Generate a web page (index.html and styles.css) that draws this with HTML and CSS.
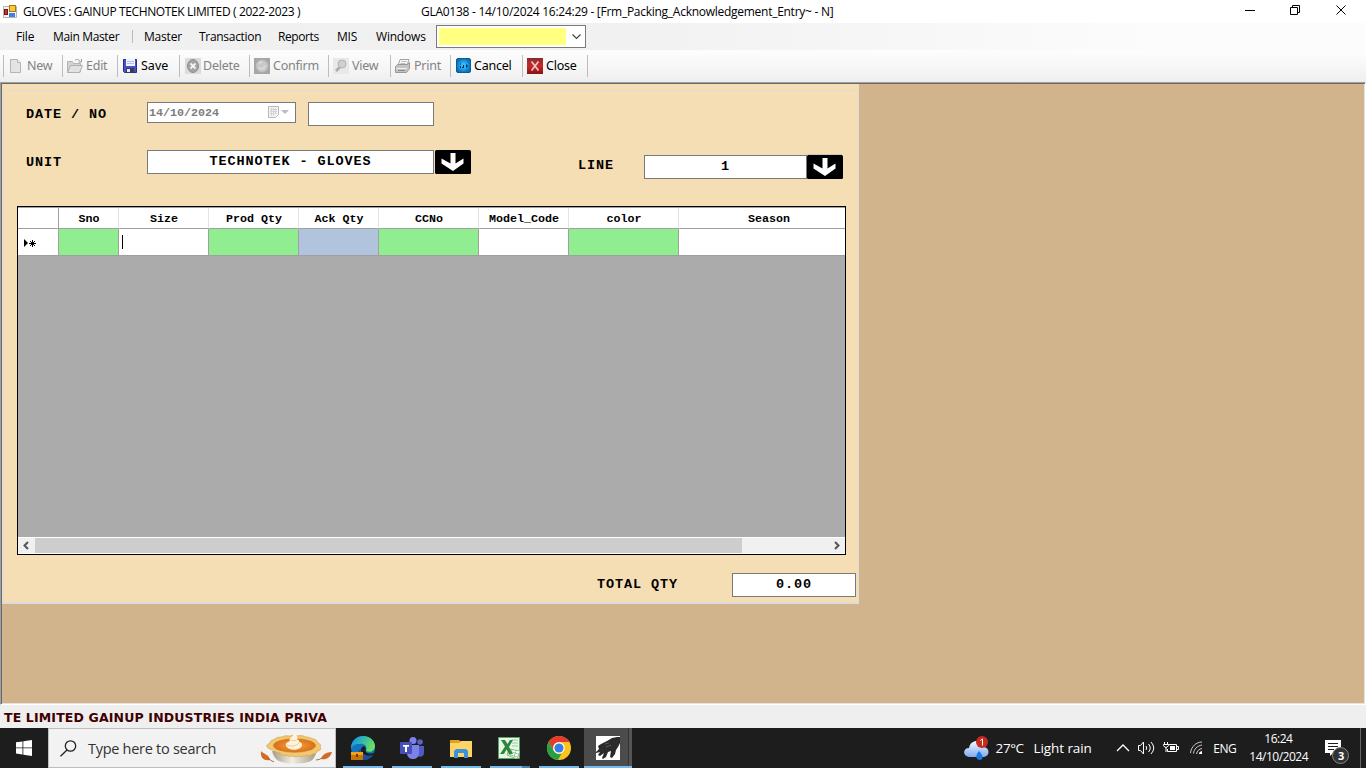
FILE: index.html
```
<!DOCTYPE HTML>
<html lang="en">
<head>
    <meta charset="UTF-8">
    <title>GLOVES : GAINUP TECHNOTEK LIMITED</title>
    <link rel="stylesheet" href="styles.css">
</head>
<body>
<div class="titlebar">
    <svg class="appicon" width="14" height="14" viewBox="0 0 14 14">
        <path d="M.5 1.500h13v11H.5z" fill="#f4f4f4" stroke="#b4b4b4"/>
        <rect x="6.500" y=".5" width="6" height="6" fill="#f8c838" stroke="#a87810"/>
        <rect x="1.500" y="4.500" width="3" height="5" fill="#d03020" stroke="#801010"/>
        <rect x="6" y="8" width="6" height="4" fill="#3d80e8"/>
    </svg>
    <span class="apptitle">GLOVES : GAINUP TECHNOTEK LIMITED ( 2022-2023 )</span>
    <span class="formtitle">GLA0138 - 14/10/2024 16:24:29 - [Frm_Packing_Acknowledgement_Entry~ - N]</span>
    <svg class="winbuttons" width="106" height="14" viewBox="0 0 106 14" fill="none" stroke="#000">
        <path d="M0 7.500h10"/>
        <path d="M45.500 4.500h7v7h-7zM47.500 4V2.500h7v7H53"/>
        <path d="M91.500 2.500l9 9M100.500 2.500l-9 9"/>
    </svg>
</div>

<div class="menubar">
    <span class="m-file">File</span>
    <span class="m-main">Main Master</span>
    <span class="m-master">Master</span>
    <span class="m-trans">Transaction</span>
    <span class="m-reports">Reports</span>
    <span class="m-mis">MIS</span>
    <span class="m-windows">Windows</span>
    <div class="combo">
        <div class="combovalue"></div>
        <svg width="9" height="6" viewBox="0 0 9 6" fill="none" stroke="#444" stroke-width="1.200"><path d="M.5 .5l4 4 4-4"/></svg>
    </div>
</div>

<div class="toolbar">
    <div class="tool t-new off">
        <svg width="16" height="16" viewBox="0 0 16 16"><path d="M1.500 1.500h7l3 3v10h-10z" fill="#e4e4e4" stroke="#b4b4b4"/><path d="M8.500 1.500v3h3" fill="#fff" stroke="#b4b4b4"/></svg>
        <span>New</span>
    </div>
    <div class="tool t-edit off">
        <svg width="16" height="16" viewBox="0 0 16 16"><path d="M.5 14V3.500h5l1 2h7V14z" fill="#d4d4d4" stroke="#b4b4b4"/><path d="M.5 14.500l3-7h12l-3 7z" fill="#e2e2e2" stroke="#b0b0b0"/><path d="M8 2.500c2-2 4-1 5 1M14.500 1v3h-3" fill="none" stroke="#999"/></svg>
        <span>Edit</span>
    </div>
    <div class="tool t-save">
        <svg width="15" height="16" viewBox="0 0 15 16"><path d="M.5 1.500h13v13h-12l-1-1z" fill="#4a50c4" stroke="#2a2c88"/><path d="M3 1h9v7H3z" fill="#eef2fc"/><path d="M4 3.500h7M4 5.500h7" stroke="#b4bce0"/><path d="M3 10h8v5H3z" fill="#333c66"/><path d="M4 11h3v3H4z" fill="#e8e8f4"/></svg>
        <span>Save</span>
    </div>
    <div class="tool t-delete off">
        <svg width="16" height="16" viewBox="0 0 16 16"><path fill="#dcdcdc" d="M0 0h16v16H0z"/><ellipse cx="8" cy="8" rx="5.500" ry="6.500" fill="#a4a4a4" stroke="#8e8e8e"/><path d="M5.500 5.500l5 5M10.500 5.500l-5 5" stroke="#f4f4f4" stroke-width="1.800"/></svg>
        <span>Delete</span>
    </div>
    <div class="tool t-confirm off">
        <svg width="16" height="16" viewBox="0 0 16 16"><path fill="#a6a6a6" d="M0 0h16v16H0z"/><circle cx="8" cy="8" r="6" fill="#c9c9c9" stroke="#bababa"/><path d="M5 10q4 2 6-2M5 5l3-1" fill="none" stroke="#dedede" stroke-width="1.500"/></svg>
        <span>Confirm</span>
    </div>
    <div class="tool t-view off">
        <svg width="16" height="16" viewBox="0 0 16 16"><path fill="#e8e8e8" d="M0 0h16v16H0z"/><path d="M3 13l5-5" stroke="#aaa" stroke-width="2.500"/><circle cx="9" cy="6" r="4" fill="#cfcfcf" stroke="#b4b4b4"/></svg>
        <span>View</span>
    </div>
    <div class="tool t-print off">
        <svg width="16" height="16" viewBox="0 0 16 16"><path d="M5 1.500h9l-2 6H3z" fill="#f6f6f6" stroke="#a4a4a4"/><path d="M6.500 3.500h5M5.500 5.500h5" stroke="#bbb"/><path d="M.5 8.500l2-2h10l2-2v6l-3 4H.5z" fill="#c4c4c4" stroke="#999"/><path d="M1 10.500h11" stroke="#eee"/><path d="M3 12.500h7" stroke="#888"/></svg>
        <span>Print</span>
    </div>
    <div class="tool t-cancel">
        <svg width="16" height="16" viewBox="0 0 16 16"><defs><radialGradient id="blue"><stop offset=".3" stop-color="#35b8f8"/><stop offset="1" stop-color="#0871b8"/></radialGradient></defs><rect x=".5" y=".5" width="14" height="14" rx="1.500" fill="url(#blue)" stroke="#085a98"/><path d="M4 6h1M4.500 8v2M6 9.500h2M7.500 7v2M10.500 6.500v3M11 8h1" stroke="#043050"/></svg>
        <span>Cancel</span>
    </div>
    <div class="tool t-close">
        <svg width="16" height="16" viewBox="0 0 16 16"><defs><linearGradient id="red" x2="0" y2="1"><stop stop-color="#8c2a2e"/><stop offset=".5" stop-color="#c82828"/><stop offset="1" stop-color="#851414"/></linearGradient></defs><path fill="url(#red)" d="M0 0h16v16H0z"/><path d="M4.500 3.500l7 9M11.500 3.500l-7 9" stroke="#f4c4c4" stroke-width="1.700"/></svg>
        <span>Close</span>
    </div>
</div>

<div class="mdi">
    <div class="form">
        <div class="groupbox">
            <div class="row row-date">
                <label>DATE / NO</label>
                <div class="field datepick">
                    <span>14/10/2024</span>
                    <svg width="22" height="13" viewBox="0 0 22 13"><path d="M.5 .5h10v8l-3 3h-7z" fill="#f4f4f4" stroke="#b8b8b8"/><path d="M2 3.500h7M2 5.500h7M2 7.500h7M3.500 2v8M5.500 2v8M7.500 2v6" stroke="#d4d4dc"/><path d="M13 4h8l-4 4z" fill="#bcbcbc"/></svg>
                </div>
                <div class="field entryno"></div>
            </div>
            <div class="row row-unit">
                <label>UNIT</label>
                <div class="field unit">TECHNOTEK - GLOVES</div>
                <svg class="drop" width="36" height="25" viewBox="0 0 36 25"><rect width="36" height="24" rx="1.500"/><path d="M15.500 3h5v10.500l8-5v5L18 21 6.500 13.500v-5l9 5z" fill="#fff"/></svg>
                <label class="linelabel">LINE</label>
                <div class="field line">1</div>
                <svg class="drop drop-line" width="36" height="25" viewBox="0 0 36 25"><path d="M0 .5h35" stroke="#c8c8c8"/><rect y="1" width="36" height="24" rx="1.500"/><path d="M15.500 4h5v10.500l8-5v5L18 22 6.500 14.500v-5l9 5z" fill="#fff"/></svg>
            </div>

            <div class="gridbox">
                <table class="grid">
                    <colgroup>
                        <col class="w-head"><col class="w-sno"><col class="w-size"><col class="w-size"><col class="w-ack"><col class="w-cc"><col class="w-size"><col class="w-color"><col class="w-season">
                    </colgroup>
                    <tr>
                        <th></th>
                        <th>Sno</th>
                        <th>Size</th>
                        <th>Prod Qty</th>
                        <th>Ack Qty</th>
                        <th>CCNo</th>
                        <th>Model_Code</th>
                        <th>color</th>
                        <th class="season">Season</th>
                    </tr>
                    <tr>
                        <td><svg width="13" height="9" viewBox="0 0 13 9"><path d="M0 0v8l4-4z"/><path d="M8.500 1v7M5 4.500h7M6 2l5 5M11 2L6 7" stroke="#000"/></svg></td>
                        <td class="green"></td>
                        <td><i class="caret"></i></td>
                        <td class="green"></td>
                        <td class="blue"></td>
                        <td class="green"></td>
                        <td></td>
                        <td class="green"></td>
                        <td></td>
                    </tr>
                </table>
                <div class="scroll">
                    <svg width="17" height="15" viewBox="0 0 17 15" fill="none" stroke="#555" stroke-width="2"><path d="M10 4L6.500 7.500l3.500 3.500"/></svg>
                    <div class="thumb"></div>
                    <svg width="17" height="15" viewBox="0 0 17 15" fill="none" stroke="#555" stroke-width="2"><path d="M7 4l3.500 3.500L7 11"/></svg>
                </div>
            </div>

            <div class="row row-total">
                <label>TOTAL QTY</label>
                <div class="field total">0.00</div>
            </div>
        </div>
    </div>
</div>

<div class="status"><span>TE LIMITED GAINUP INDUSTRIES INDIA PRIVA</span></div>

<div class="taskbar">
    <div class="start">
        <svg width="16" height="16" viewBox="0 0 16 16" fill="#fff"><path d="M0 2.300l6.500-.9v6.100H0zM7.300 1.300L16 0v7.500H7.300zM0 8.300h6.500v6.200L0 13.600zM7.300 8.300H16V16l-8.700-1.300z"/></svg>
    </div>
    <div class="search">
        <svg class="glass" width="17" height="17" viewBox="0 0 17 17" fill="none" stroke="#222" stroke-width="1.300"><circle cx="10.500" cy="6" r="5.200"/><path d="M7 10L.5 16.300"/></svg>
        <span>Type here to search</span>
        <svg class="pie" width="72" height="33" viewBox="0 0 72 33">
            <defs>
                <linearGradient id="dish"><stop stop-color="#a79c86"/><stop offset=".45" stop-color="#f1eee2"/><stop offset="1" stop-color="#a69a82"/></linearGradient>
                <radialGradient id="filling"><stop stop-color="#fba53a"/><stop offset="1" stop-color="#d87018"/></radialGradient>
            </defs>
            <path d="M12 19c2 7 5 10 10 11 7 2 19 2 26 0 5-1 7-5 9-11z" fill="url(#dish)"/>
            <path d="M7 15c-1-2 1-3 3-4 0-3 3-3 5-4 2-2 5-2 7-2 3-2 6-1 8-1 3-1 6-1 8 0 3-1 6 0 8 1 3 0 5 1 7 2 3 0 4 2 5 4 3 1 3 3 2 4 2 2 0 4-3 4 0 3-3 3-5 3-2 2-4 2-6 1-2 2-5 2-7 1-2 1-5 1-7 0-2 1-5 0-6-1-3 1-5 0-6-2-3 0-5-1-6-3-3 0-5-1-7-3z" fill="#f2c772" stroke="#d9a24c" stroke-width=".7"/>
            <ellipse cx="34.500" cy="13.500" rx="21" ry="6.800" fill="url(#filling)" stroke="#c87a2c" stroke-width=".6"/>
            <path d="M26 14c-1-3 2-4 4-5-2-3 3-3 4-8 3 2 4 4 3 6 3 1 2 3 2 3 4 1 4 4 1 6-4 3-12 2-14-2z" fill="#fff3dc"/>
            <path d="M31 8c3 1 5 1 7-1M27 13c5 2 9 1 12-2" stroke="#dcc39a" fill="none" stroke-width=".8"/>
            <path d="M1 19c2 3 8 3 9 9-5 1-10-1-9-9z" fill="#d36a25"/><path d="M8 26q3 3 6 4" fill="none" stroke="#8a4b25" stroke-width=".8"/>
            <path d="M72 20c-6 0-10 3-11 7 5 1 9-1 11-7z" fill="#d36a25"/><path d="M62 26q-3 2-6 2" fill="none" stroke="#8a4b25" stroke-width=".8"/>
        </svg>
    </div>
    <div class="apps">
        <div class="app">
            <svg width="24" height="24" viewBox="0 0 24 24"><defs><linearGradient id="edge" x2="1" y2=".4"><stop offset=".2" stop-color="#169ddc"/><stop offset="1" stop-color="#68df62"/></linearGradient></defs><circle cx="12" cy="12" r="12" fill="#1473bd"/><path d="M0 11C1 4 6 0 12 0c8 0 12 6 12 10 0 5-5 7-9 5 2-6-3-8-7-7C4 8 1 10 0 13z" fill="url(#edge)"/><path d="M9 13c0 6 6 9 13 6-2 3-5 5-9 5-6-1-7-8-4-11z" fill="#1b4f9c"/><path d="M13 10c3 2 1 4 2 6 2 2 6 2 9 0l-2 3c-5 2-11 0-12-4-1-2 1-4 3-5z" fill="#1d1d1d"/><path d="M0 16h12v8H0z" fill="#c87408"/><path d="M0 16h12v3H0z" fill="#f3a01c"/><path d="M5 18h2v3H5z" fill="#6d3a00"/></svg>
        </div>
        <div class="app">
            <svg width="24" height="22" viewBox="0 0 24 22"><circle cx="20" cy="5" r="2.800" fill="#5b63c9"/><circle cx="13" cy="3.500" r="3.500" fill="#7b83eb"/><path d="M16 9h8v7c0 3-3 5-7 3z" fill="#525ac4"/><path d="M7 8h12v8c0 8-12 8-12 0z" fill="#7b83eb"/><rect y="5" width="12" height="12" rx="1" fill="#4650b8"/><path d="M3 8h6v1.800H7V15H5V9.800H3z" fill="#fff"/></svg>
        </div>
        <div class="app">
            <svg width="22" height="19" viewBox="0 0 22 19"><path d="M0 1h9l2 2-1 3H0z" fill="#e3a018"/><path d="M0 4h9l2-2h11v16H0z" fill="#fcd568"/><path d="M4 19v-7l2-2h10l2 2v7h-4v-5H8v5z" fill="#3d91d7"/></svg>
        </div>
        <div class="app split">
            <svg width="22" height="22" viewBox="0 0 22 22"><path d="M.5 .5h21v21H.5z" fill="#e8f5e8" stroke="#55a663"/><path d="M14 3h6M14 6h6M14 9h6" stroke="#9cce9d"/><path d="M11 12l11 2-3 8-10-4z" fill="#fff" stroke="#7dbb85"/><path d="M11 14l9 3M10 17l9 3M14 13l-2 6M18 14l-2 6" stroke="#91ca91"/><path d="M3 3h4l2.500 4L12 3h3l-4 7 4 7h-4l-2.500-4.500L6 17H2l5-7.500z" fill="#2e8638"/></svg>
        </div>
        <div class="app">
            <svg width="24" height="24" viewBox="0 0 24 24"><circle cx="12" cy="12" r="12" fill="#fbc51c"/><path d="M1.600 6A12 12 0 0 1 22.400 6H12a6 6 0 0 0-5.200 9z" fill="#e33b2e"/><path d="M1.600 6l5.200 9A6 6 0 0 0 14.500 17.500L11 24A12 12 0 0 1 1.600 6z" fill="#24a148"/><circle cx="12" cy="12" r="5.800" fill="#fff"/><circle cx="12" cy="12" r="4.600" fill="#397de8"/></svg>
        </div>
        <div class="app active">
            <svg width="24" height="24" viewBox="0 0 24 24"><path fill="#fff" d="M0 0h24v24H0z"/><path d="M2 10l3-2 6-3 5-3 5-1h3v6l-2 4-2 3-1 4-3 4-2-1 1-6-3 1-2 5-3 2-1-1 2-5-4 3-2-1 2-3-4 1v-1l3-3z" fill="#2b2b2b"/><path d="M9 8l4-1M10 11l5-2" stroke="#595959"/></svg>
        </div>
    </div>

    <div class="weather">
        <svg width="26" height="24" viewBox="0 0 26 24"><defs><linearGradient id="cloud" x2="0" y2="1"><stop stop-color="#f2f7ff"/><stop offset="1" stop-color="#82aaf0"/></linearGradient></defs><path d="M5 21c-7-1-6-9 0-9 1-5 4-7 8-7 5 0 7 4 7 6 6 1 6 9 0 10z" fill="url(#cloud)"/><path d="M15 15c-5 6-2 9 1 9s4-4-1-9z" fill="#1878e8"/><circle cx="18" cy="6" r="6" fill="#c62b20"/><path d="M16.300 4.500L18.500 3v6.500" stroke="#fff" fill="none"/></svg>
        <span class="temp">27°C</span>
        <span class="cond">Light rain</span>
    </div>
    <div class="tray">
        <svg width="14" height="8" viewBox="0 0 14 8" fill="none" stroke="#fff" stroke-width="1.300"><path d="M1 7l6-6 6 6"/></svg>
        <svg class="vol" width="17" height="14" viewBox="0 0 17 14" fill="none" stroke="#fff"><path d="M.5 4.500h2l3-3.500v12l-3-3.500h-2zM8 5q1.500 2 0 4M10.500 3q3.500 4 0 8M13 1q5.500 6 0 12"/></svg>
        <svg class="batt" width="16" height="12" viewBox="0 0 16 12" fill="none" stroke="#fff"><path d="M5.500 2.500h8v7h-9V7M13.500 4.500h2v3h-2M1.500 0v2M4.500 0v2M.5 2.500h5v1q-2.500 4-5 0zM3 5v5"/><path d="M7 4h5v4H7z" fill="#fff" stroke="none"/></svg>
        <svg class="wifi" width="14" height="14" viewBox="0 0 14 14" fill="none" stroke="#ccc"><path d="M.5 12C1 6 6 1 12 1M3.500 12.500C4 8 7 5 12 4M6.500 13C7 10 9 8 12 7.500"/><path d="M9 13q0-2.500 3-3v3z" fill="#fff" stroke="none"/></svg>
        <span class="lang">ENG</span>
        <div class="clock"><span class="time">16:24</span><span class="date">14/10/2024</span></div>
        <div class="notify">
            <svg width="16" height="16" viewBox="0 0 16 16"><path d="M0 0h16v13H8l-3 3v-3H0z" fill="#fff"/><path d="M3 3.500h10M3 6.500h10M3 9.500h6" stroke="#1d1d1d"/></svg>
            <b>3</b>
        </div>
        <div class="peek"></div>
    </div>
</div>
</body>
</html>
```

FILE: styles.css
```
html, body {
    height: 100%;
    overflow: hidden;
}

body {
    margin: 0;
    padding: 0;
    font-size: 12px;
    font-family: "Open Sans", "Noto Sans", sans-serif;
    background: #efefef;
    color: #000;
}

svg {
    display: block;
    flex: none;
}

span, label {
    white-space: nowrap;
    flex: none;
}

/* title bar */
.titlebar {
    display: flex;
    align-items: center;
    height: 23px;
    background: white;
    letter-spacing: -0.37px;
}

.appicon {
    margin: 0 6px 0 3px;
}

.apptitle {
    width: 398px;
}

.formtitle {
    width: 824px;
    letter-spacing: -0.27px;
}

.winbuttons {
    margin-top: -3px;
}

/* menu */
.menubar {
    display: flex;
    align-items: center;
    box-sizing: border-box;
    height: 27px;
    padding-left: 16px;
    background: linear-gradient(to right, #f0f0f0, #f1f1f1 45%, #fcfcfc 85%);
    letter-spacing: -0.2px;
}

.m-file { width: 37px; }

.m-main {
    width: 79px;
    margin-right: 11px;
    border-right: 1px solid #b9b9b9;
    line-height: 13px;
    letter-spacing: -0.35px;
}

.m-master { width: 55px; }
.m-trans { width: 79px; letter-spacing: -0.3px; }
.m-reports { width: 59px; letter-spacing: -0.4px; }
.m-mis { width: 39px; }
.m-windows { width: 60px; }

.combo {
    display: flex;
    align-items: center;
    box-sizing: border-box;
    width: 150px;
    height: 23px;
    padding: 0 4px 0 2px;
    justify-content: space-between;
    background: white;
    border: 1px solid #7a7a7a;
}

.combovalue {
    width: 127px;
    height: 17px;
    background: #ffff80;
}

/* toolbar */
.toolbar {
    display: flex;
    align-items: center;
    box-sizing: border-box;
    height: 32px;
    padding: 0 0 1px 3px;
    background: linear-gradient(#fdfdfd, #f7f7f7 50%, #eee);
    font-family: "Noto Sans", sans-serif;
    font-size: 12.5px;
    letter-spacing: -0.25px;
}

.tool {
    display: flex;
    align-items: center;
    box-sizing: border-box;
    height: 22px;
    padding-left: 5px;
    border-left: 1px solid #bdbdbd;
}

.tool svg {
    margin-right: 2px;
}

.tool span {
    line-height: 16px;
}

.off {
    color: #838383;
}

.t-new { width: 59px; }
.t-edit { width: 55px; padding-left: 4px; }
.t-edit svg { margin-right: 3px; }
.t-save { width: 62px; }
.t-save svg { margin-right: 3px; }
.t-save span { letter-spacing: 0; }
.t-delete { width: 70px; }
.t-confirm { width: 79px; padding-left: 4px; }
.t-confirm svg { margin-right: 3px; }
.t-view { width: 62px; padding-left: 4px; }
.t-view svg { margin-right: 3px; }
.t-print { width: 60px; padding-left: 4px; }
.t-print svg { margin-right: 3px; }
.t-cancel { width: 72px; }
.t-close { width: 66px; padding-left: 4px; border-right: 1px solid #bdbdbd; }
.t-close svg { margin-right: 3px; }

/* workspace */
.mdi {
    box-sizing: border-box;
    height: 623px;
    padding-left: 1px;
    background: #d2b48c;
    border-top: 1px solid #a0a0a0;
    border-left: 1px solid #a0a0a0;
    border-right: 1px solid #fff;
    border-bottom: 1px solid #fff;
    box-shadow: inset 1px 1px #696969, inset -1px -1px #e3e3e3;
}

.form {
    box-sizing: border-box;
    width: 857px;
    height: 521px;
    padding: 6px 0 0 1px;
    background: #f5deb3;
    border-top: 1px solid #696969;
}

.groupbox {
    box-sizing: border-box;
    width: 856px;
    height: 514px;
    border: 1px solid #dcdcdc;
    box-shadow: inset 0 -1px #dcdcdc;
    font: bold 13.5px/16px "Liberation Mono", monospace;
    letter-spacing: 0.9px;
}

.row {
    display: flex;
    align-items: flex-start;
    padding-left: 22px;
}

.row-date {
    height: 48px;
    padding-top: 11px;
}

.row-unit {
    height: 56px;
}

.row label {
    width: 121px;
    padding-top: 5px;
}

.field {
    box-sizing: border-box;
    height: 24px;
    padding-top: 3px;
    background: white;
    border: 1px solid #7a7a7a;
    text-align: center;
}

.datepick {
    display: flex;
    justify-content: space-between;
    width: 149px;
    height: 21px;
    padding: 2px 5px 0 1px;
    color: #7d7d7d;
    font-size: 11.67px;
    letter-spacing: 0;
}

.datepick svg {
    margin-top: 1px;
}

.entryno {
    width: 126px;
    margin-left: 12px;
}

.unit {
    width: 287px;
}

.drop {
    margin-left: 1px;
}

.row-unit .linelabel {
    width: 66px;
    margin-left: 107px;
    padding-top: 8px;
}

.line {
    width: 163px;
    margin-top: 5px;
}

.drop-line {
    margin: 4px 0 0;
}

/* data grid */
.gridbox {
    display: flex;
    flex-direction: column;
    justify-content: space-between;
    box-sizing: border-box;
    width: 829px;
    height: 349px;
    margin-left: 13px;
    background: #ababab;
    border: 1px solid #000;
}

.grid {
    width: 827px;
    table-layout: fixed;
    border-collapse: separate;
    border-spacing: 0;
    border-top: 1px solid #a0a0a0;
}

.w-head { width: 41px; }
.w-sno { width: 60px; }
.w-size { width: 90px; }
.w-ack { width: 80px; }
.w-cc { width: 100px; }
.w-color { width: 110px; }
.w-season { width: 166px; }

.grid th {
    height: 18px;
    padding: 2px 0 0 1px;
    background: white;
    border-right: 1px solid #e3e3e3;
    border-bottom: 1px solid #a0a0a0;
    font-size: 11.67px;
    line-height: 14px;
    letter-spacing: 0;
}

.grid td {
    height: 26px;
    padding: 0;
    background: white;
    border-right: 1px solid #a0a0a0;
    border-bottom: 1px solid #a0a0a0;
}

.grid th:first-child {
    border-right-color: #a0a0a0;
}

.grid th:last-child, .grid td:last-child {
    border-right: none;
}

.grid .season {
    padding-left: 14px;
}

.grid td svg {
    margin: 2px 0 0 6px;
}

.grid .green {
    background: #90ee90;
}

.grid .blue {
    background: #b0c4de;
}

.caret {
    display: block;
    width: 1px;
    height: 14px;
    margin: 0 0 1px 3px;
    background: #000;
}

.scroll {
    display: flex;
    height: 15px;
    background: #f0f0f0;
    border-top: 1px solid #fff;
    border-bottom: 1px solid #fff;
}

.thumb {
    width: 707px;
    margin-right: 86px;
    background: #cdcdcd;
}

.row-total {
    padding: 18px 0 0 593px;
}

.row-total label {
    width: 135px;
    padding-top: 4px;
}

.total {
    width: 124px;
}

/* scrolling company name */
.status {
    height: 23px;
    background: #efefef;
    color: #400000;
    font: bold 12.5px/25px "DejaVu Sans", sans-serif;
    padding-left: 4px;
    letter-spacing: 0.15px;
}

/* taskbar */
.taskbar {
    display: flex;
    height: 40px;
    background: #1d1d1d;
    color: white;
}

.start {
    display: flex;
    align-items: center;
    justify-content: center;
    width: 48px;
}

.search {
    display: flex;
    align-items: center;
    box-sizing: border-box;
    width: 288px;
    padding-left: 11px;
    background: #f2f2f2;
    border: 1px solid #bebebe;
    color: #333;
    font-size: 14.5px;
    letter-spacing: -0.27px;
}

.search span {
    width: 172px;
    margin-left: 11px;
}

.apps {
    display: flex;
    width: 622px;
    padding-left: 3px;
}

.app {
    display: flex;
    align-items: center;
    justify-content: center;
    box-sizing: border-box;
    width: 40px;
    margin: 0 5px 0 4px;
    border-bottom: 2px solid #76b9ed;
    padding-top: 2px;
}

.split {
    padding-right: 2px;
    border-image: linear-gradient(to right, #76b9ed 31px, #527fa5 31px) 2;
    border-style: none none solid;
}

.active {
    width: 48px;
    margin: 0;
    background: linear-gradient(to right, #4b4b4b 44px, #333 44px, #333 45px, #555 45px);
}

.weather {
    display: flex;
    align-items: center;
    width: 153px;
    padding-left: 4px;
    font-size: 13.5px;
    letter-spacing: -0.1px;
}

.temp {
    width: 38px;
    margin-left: 6px;
    letter-spacing: -0.4px;
}

.tray {
    display: flex;
    align-items: center;
    width: 250px;
    font-size: 12px;
    letter-spacing: -0.5px;
}

.vol { margin-left: 8px; }
.batt { margin-left: 8px; }
.wifi { margin-left: 11px; }

.lang {
    width: 36px;
    margin-left: 9px;
}

.clock {
    width: 58px;
    text-align: center;
    line-height: 18px;
}

.clock span {
    display: block;
}

.notify {
    position: relative;
    margin: -1px 0 0 18px;
}

.notify b {
    position: absolute;
    left: 7px;
    top: 7px;
    box-sizing: border-box;
    width: 17px;
    height: 17px;
    background: #333;
    border: 1px solid #888;
    border-radius: 50%;
    font-size: 11px;
    line-height: 15px;
    text-align: center;
}

.peek {
    height: 40px;
    margin-left: 19px;
    border-left: 1px solid #666;
}
```
